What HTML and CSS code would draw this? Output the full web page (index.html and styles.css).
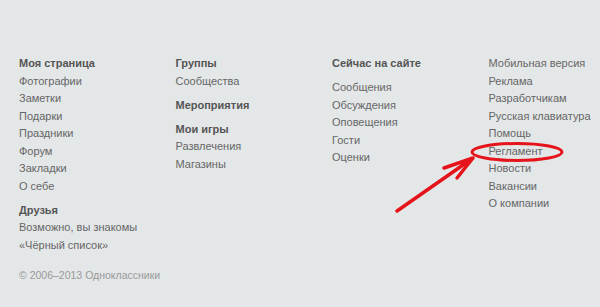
FILE: index.html
```html
<!DOCTYPE html>
<html lang="ru">
<head>
  <meta charset="UTF-8">
  <title>Одноклассники</title>
  <link rel="stylesheet" href="styles.css">
</head>
<body>
  <div class="footer">
    <div class="columns">
      <div class="col">
        <div class="group">
          <div class="head">Моя страница</div>
          <a href="#">Фотографии</a>
          <a href="#">Заметки</a>
          <a href="#">Подарки</a>
          <a href="#">Праздники</a>
          <a href="#">Форум</a>
          <a href="#">Закладки</a>
          <a href="#">О себе</a>
        </div>
        <div class="group">
          <div class="head">Друзья</div>
          <a href="#">Возможно, вы знакомы</a>
          <a href="#">«Чёрный список»</a>
        </div>
      </div>

      <div class="col">
        <div class="group">
          <div class="head">Группы</div>
          <a href="#">Сообщества</a>
        </div>
        <div class="group">
          <div class="head">Мероприятия</div>
        </div>
        <div class="group">
          <div class="head">Мои игры</div>
          <a href="#">Развлечения</a>
          <a href="#">Магазины</a>
        </div>
      </div>

      <div class="col">
        <div class="group">
          <div class="head head-apart">Сейчас на сайте</div>
          <a href="#">Сообщения</a>
          <a href="#">Обсуждения</a>
          <a href="#">Оповещения</a>
          <a href="#">Гости</a>
          <a href="#">Оценки</a>
        </div>
      </div>

      <div class="col">
        <div class="group">
          <a href="#">Мобильная версия</a>
          <a href="#">Реклама</a>
          <a href="#">Разработчикам</a>
          <a href="#">Русская клавиатура</a>
          <a href="#">Помощь</a>
          <a href="#">Регламент</a>
          <a href="#">Новости</a>
          <a href="#">Вакансии</a>
          <a href="#">О компании</a>
        </div>
      </div>
    </div>

    <div class="copyright">© 2006–2013 Одноклассники</div>
  </div>

  <!-- red marker drawn over the page -->
  <svg class="marker" width="600" height="307" viewBox="0 0 600 307">
    <ellipse cx="517" cy="152" rx="45" ry="8.5" fill="none" stroke="#e5141b" stroke-width="3"/>
    <path d="M397 211 L473 158 M473 158 L444 168 M473 158 L457 178" fill="none" stroke="#e5141b" stroke-width="3.5" stroke-linecap="round" stroke-linejoin="round"/>
  </svg>
</body>
</html>
```

FILE: styles.css
```css
body {
  margin: 0;
  background-color: #e4e7e8;
  font-family: "Liberation Sans", Arial, sans-serif;
  font-size: 11px;
  color: #666;
}
.footer {
  padding: 55px 0 0 19px;
}
.columns {
  display: grid;
  grid-template-columns: 156.5px 156.5px 156.5px 1fr;
}
.col {
  display: flex;
  flex-direction: column;
}
.group {
  display: flex;
  flex-direction: column;
}
.group + .group {
  margin-top: 6.5px;
}
.head {
  font-weight: bold;
  color: #555;
  line-height: 17.5px;
}
.head-apart {
  margin-bottom: 6.5px;
}
.group a {
  color: #666;
  text-decoration: none;
  line-height: 17.5px;
}
.copyright {
  margin-top: 12.5px;
  line-height: 17.5px;
  font-size: 10.5px;
  color: #999;
}
.marker {
  position: absolute;
  top: 0;
  left: 0;
  pointer-events: none;
}
```
